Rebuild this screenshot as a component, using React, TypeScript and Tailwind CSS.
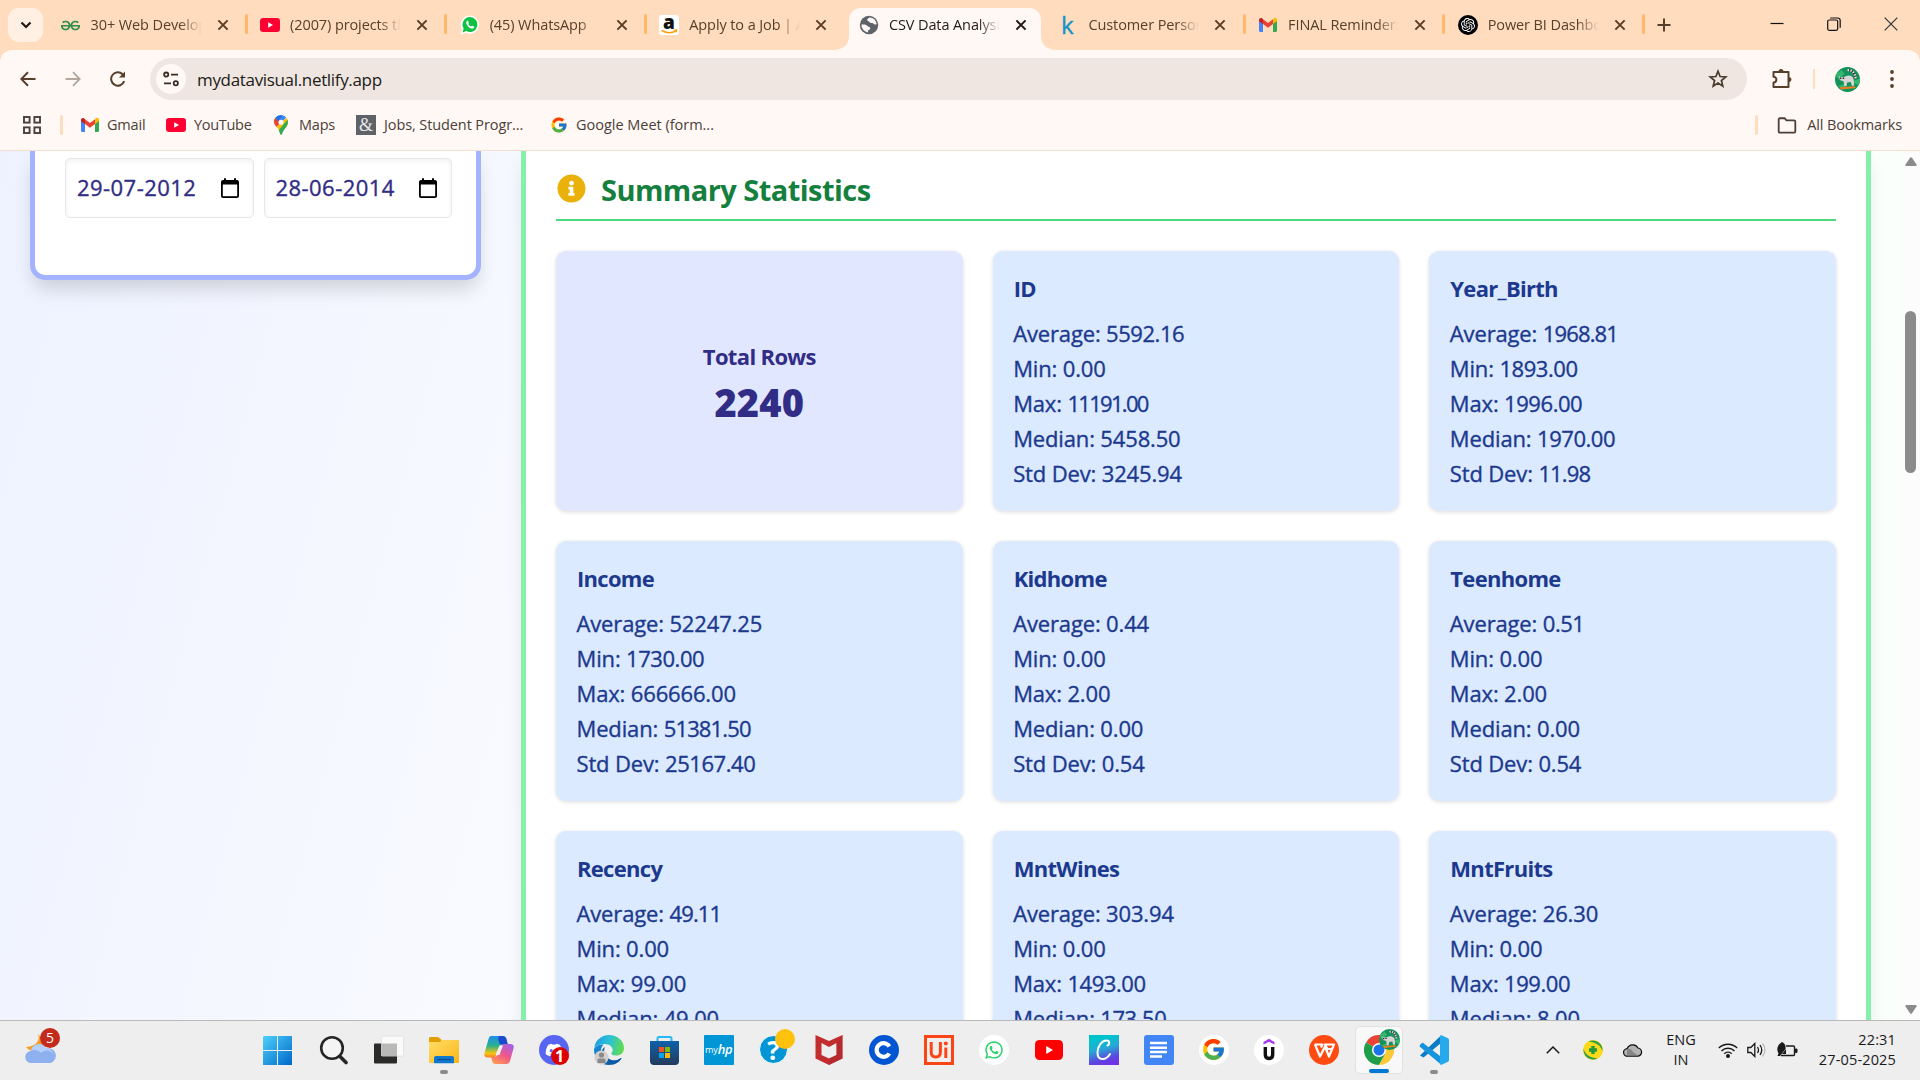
import React from "react";
import { FaInfoCircle, FaDiscord, FaWhatsapp } from "react-icons/fa";
import { FcGoogle } from "react-icons/fc";
import { SiGeeksforgeeks, SiOpenai } from "react-icons/si";

type IconProps = { className?: string };

/* ---------- shared brand icons ---------- */

const YouTube = ({ className = "w-5 h-5" }: IconProps) => (
  <svg viewBox="0 0 20 20" className={className}>
    <rect x="0" y="3" width="20" height="14" rx="3.2" fill="#ff0033" />
    <path d="M8.2 7.2v5.6l4.8-2.8z" fill="#fff" />
  </svg>
);

const Gmail = () => (
  <svg viewBox="0 0 20 20" className="h-5 w-5">
    <path d="M1 5v10.5c0 .8.6 1.5 1.4 1.5H5V8z" fill="#4285f4" />
    <path d="M15 8v9h2.600c.8 0 1.400-.7 1.400-1.500V5z" fill="#34a853" />
    <path d="M15 4.500V9l4-3V5c0-1.900-2-2.700-3.300-1.700z" fill="#fbbc04" />
    <path d="M5 9V4.300L10 8l5-3.700V9l-5 3.800z" fill="#ea4335" />
    <path d="M1 5v1.200L5 9V4.300l-.8-.8C2.900 2.500 1 3.300 1 5z" fill="#c5221f" />
  </svg>
);

const WhatsAppTab = () => (
  <svg viewBox="0 0 20 20" className="h-5 w-5">
    <path d="M10 .5a9 9 0 0 1 0 18.200c-1.500 0-2.900-.3-4.200-1L.6 19.500l1.500-5A9.200 9.200 0 0 1 10 .5z" fill="#fff" />
    <path d="M10 2a7.500 7.500 0 1 1-3.700 14.100l-3.800 1.300 1.200-3.800A7.600 7.600 0 0 1 10 2z" fill="#0dc143" />
    <path d="M7.200 5.700c-1 .7-1.300 2-.6 3.500.9 2 2.700 3.700 4.700 4.400 1.500.5 2.600-.1 3-1.300.1-.4 0-.6-.3-.8l-1.600-.8c-.3-.1-.6 0-.8.3l-.5.6c-1.200-.4-2.200-1.300-2.800-2.500l.5-.7c.1-.2.1-.4 0-.6l-.7-1.700c-.2-.4-.5-.6-.9-.4z" fill="#fff" />
  </svg>
);

const Amazon = () => (
  <span className="flex h-5 w-5 items-center justify-center overflow-hidden rounded-[3px] bg-white">
    <svg viewBox="0 0 20 20" className="h-5 w-5">
      <text x="10" y="13.500" textAnchor="middle" fontSize="19" fontWeight="800" fontFamily="Open Sans, sans-serif" fill="#111">a</text>
      <path d="M2.500 15.400c4.500 3 10.500 3 14.500.2" stroke="#f90" strokeWidth="1.500" fill="none" />
      <path d="M14.800 15l2.900-.1-.6 2.500" stroke="#f90" strokeWidth="1.200" fill="none" />
    </svg>
  </span>
);

const Kaggle = () => (
  <svg viewBox="0 0 20 20" className="h-5 w-5 overflow-visible">
    <text x="3" y="19" fontSize="24" fontWeight="500" fontFamily="Open Sans, sans-serif" fill="#1295c8" stroke="#1295c8" strokeWidth=".4">k</text>
  </svg>
);

const Globe = () => (
  <svg viewBox="0 0 20 20" className="h-5 w-5">
    <circle cx="10" cy="10" r="9.200" fill="#5f6368" />
    <path d="M10.500 2.600c-1.300.8-2.400 1.700-2.300 2.700.2 1 1.500.6 2 1.500.4.8 1.700 1.300 3 1.200 1.200 0 1.600 1.300 2.700 1.500.7.1 1.300-.3 1.700-.6A7.600 7.600 0 0 0 10.500 2.600zM2.400 9.500c1.400.2 3.300-.2 4.600.4 1.300.5 2 1.700 3.200 2.100.8.300 1.400 1 .9 1.900-.5.800-1.600.8-2 1.700-.3.600-.2 1.300 0 1.900A7.600 7.600 0 0 1 2.400 9.500z" fill="#fff8f5" />
  </svg>
);

const OpenAI = () => (
  <span className="flex h-5 w-5 items-center justify-center rounded-full bg-black">
    <SiOpenai className="h-[14px] w-[14px] text-white" />
  </span>
);

const MapsPin = () => (
  <svg viewBox="0 0 20 20" className="h-5 w-5">
    <path d="M3 7.200A7 7 0 0 1 10 .3c2 0 3.900.9 5.200 2.200L10 8.200z" fill="#4285f4" />
    <path d="M4.700 2.600L10 7 5.600 12C4 10 3 9 3 7a6.800 6.800 0 0 1 1.700-4.400z" fill="#ea4335" />
    <path d="M15.500 2.900A7 7 0 0 1 17 7.200c0 2-.8 3.500-2 5L8.500 16c-.8-1.700-1.900-3-3-4.200z" fill="#fbbc04" />
    <path d="M16.500 4.700c.9 2.800.3 5.300-1.500 7.500-2 2.500-3.300 4.500-4 7-.3.700-1.400.7-1.700 0-.5-1.500-.9-2.600-1.600-3.900z" fill="#34a853" />
    <path d="M4.700 2.600A7 7 0 0 1 12 .6L6.500 6z" fill="#1a73e8" />
    <circle cx="10" cy="7.200" r="2.500" fill="#fff" />
  </svg>
);

const Lemur = ({ className = "h-[25px] w-[25px]" }: IconProps) => (
  <svg viewBox="0 0 26 26" className={className}>
    <defs>
      <clipPath id="avatarClip"><circle cx="13" cy="13" r="13" /></clipPath>
    </defs>
    <g clipPath="url(#avatarClip)">
      <rect width="26" height="26" fill="#12935b" />
      <path d="M0 8l7-5 3 4-6 6zM17 15l9-3v8zM3 20l6-2 1 6z" fill="#36b56c" />
      <path d="M13 3.500c4-1 8 2 8.500 9" stroke="#3a3a3a" strokeWidth="2.400" fill="none" />
      <path d="M13 3.500c4-1 8 2 8.500 9" stroke="#e2dede" strokeWidth="2.400" strokeDasharray="1.600 1.400" fill="none" />
      <path d="M4 9l1.500 1.500h4L11 9.500c4-1.500 8 0 8.500 4l.5 6h-2.500l-1-4-4 .5-.5 4H9.500l-.5-5-4-1.500z" fill="#d8d4d4" />
      <path d="M5 11h1.600v1.600H5zM8 11h1.500v1.500H8z" fill="#222" />
      <path d="M5 21l15-1 2 1.800-16 1.700z" fill="#ef7c22" />
    </g>
  </svg>
);

const Cross = ({ className = "text-[#5a3d25]" }: IconProps) => (
  <svg viewBox="0 0 12 12" className={`h-3 w-3 ${className}`}>
    <path d="M1.400 1.400l9.200 9.200M10.600 1.400l-9.200 9.200" stroke="currentColor" strokeWidth="2" />
  </svg>
);

/* ---------- tab strip ---------- */

type Tab = { title: string; icon: React.ReactNode; active?: boolean; sep?: boolean };

const tabs: Tab[] = [
  { title: "30+ Web Development", icon: <SiGeeksforgeeks className="h-[19px] w-[19px] text-[#2f8d46]" />, sep: true },
  { title: "(2007) projects that", icon: <YouTube />, sep: true },
  { title: "(45) WhatsApp", icon: <WhatsAppTab />, sep: true },
  { title: "Apply to a Job | Amazon", icon: <Amazon /> },
  { title: "CSV Data Analysis", icon: <Globe />, active: true },
  { title: "Customer Personality", icon: <Kaggle />, sep: true },
  { title: "FINAL Reminder: Join", icon: <Gmail />, sep: true },
  { title: "Power BI Dashboard", icon: <OpenAI />, sep: true },
];

function TabItem({ tab }: { tab: Tab }) {
  return (
    <div className="relative h-[42px] w-[199.600px] shrink-0">
      {tab.active && (
        <svg viewBox="0 0 224 42" className="absolute -left-[12px] top-0 h-[42px] w-[224px]">
          <path d="M0 42c9 0 16-5 16-14V12C16 5 21 0 28 0h168c7 0 12 5 12 12v16c0 9 7 14 16 14z" fill="#fff8f5" />
        </svg>
      )}
      <div className="relative flex h-[34px] w-full items-center pl-[13.500px]">
        <span className="flex w-5 justify-center">{tab.icon}</span>
        <span
          className={`ml-[10px] w-[111px] overflow-hidden whitespace-nowrap text-[14.500px] leading-5 tracking-[-0.1px] [mask-image:linear-gradient(to_right,black_80%,transparent)] ${tab.active ? "text-[#1f1a17]" : "text-[#57402b]"}`}
        >
          {tab.title}
        </span>
        <span className="ml-[15px]"><Cross className={tab.active ? "text-[#201a17]" : "text-[#5a3d25]"} /></span>
      </div>
      {tab.sep && <span className="absolute right-[-1px] top-[6px] h-5 w-[3px] rounded bg-[#ffb868]" />}
    </div>
  );
}

function TabStrip() {
  return (
    <div className="flex h-[50px] items-start bg-[#ffdcbe] pt-2">
      <div className="ml-2 flex h-[34px] w-[35px] shrink-0 items-center justify-center rounded-[11px] bg-[#fff0e3]">
        <svg viewBox="0 0 12 8" className="h-2 w-3"><path d="M1.500 1.500L6 6l4.500-4.500" stroke="#201a17" strokeWidth="2.200" fill="none" /></svg>
      </div>
      <div className="ml-1 flex h-[42px]">
        {tabs.map((t) => <TabItem key={t.title} tab={t} />)}
      </div>
      <svg viewBox="0 0 14 14" className="ml-[13px] mt-[10px] h-[14px] w-[14px]"><path d="M7 .5v13M.5 7h13" stroke="#57402b" strokeWidth="2" /></svg>
      <div className="ml-auto mr-[22px] mt-[9px] flex items-center gap-[43px]">
        <svg viewBox="0 0 14 14" className="h-[14px] w-[14px]"><path d="M.5 6.500h13" stroke="#111" strokeWidth="1.200" /></svg>
        <svg viewBox="0 0 14 14" className="h-[14px] w-[14px]">
          <rect x=".7" y="3" width="10" height="10.300" rx="1.500" stroke="#111" strokeWidth="1.200" fill="none" />
          <path d="M3.200 1h7.300c1.500 0 2.700 1 2.700 2.700v7" stroke="#111" strokeWidth="1.200" fill="none" />
        </svg>
        <svg viewBox="0 0 14 14" className="h-[14px] w-[14px]"><path d="M.7.7l12.600 12.600M13.300.7L.7 13.300" stroke="#333" strokeWidth="1.200" /></svg>
      </div>
    </div>
  );
}

/* ---------- toolbar and bookmarks ---------- */

function Toolbar() {
  return (
    <div className="flex h-[58px] items-center text-[#57402b]">
      <div className="ml-[20px] flex items-center gap-[29px]">
        <svg viewBox="0 0 16 16" className="h-4 w-4"><path d="M15.500 8H1.500M8 1.200L1.300 8 8 14.800" stroke="currentColor" strokeWidth="2" fill="none" /></svg>
        <svg viewBox="0 0 16 16" className="h-4 w-4"><path d="M.5 8h14M8 1.200L14.700 8 8 14.800" stroke="#b3a79f" strokeWidth="1.800" fill="none" /></svg>
        <svg viewBox="0 0 16 16" className="h-4 w-4">
          <path d="M14.200 10.200A6.700 6.700 0 1 1 12.600 3.200L14.600 5" stroke="currentColor" strokeWidth="2" fill="none" />
          <path d="M15 .4v6H9z" fill="currentColor" />
        </svg>
      </div>
      <div className="ml-[24px] flex h-[42px] w-[1597px] items-center rounded-full bg-[#efe6e1] pl-[6px] pr-[19px]">
        <span className="flex h-[30px] w-[30px] items-center justify-center rounded-full bg-[#fff8f5]">
          <svg viewBox="0 0 16 16" className="h-4 w-4" fill="none" stroke="#3b2c22" strokeWidth="1.800">
            <circle cx="3.200" cy="3.600" r="2.100" /><path d="M8 3.600h7M1 12.300h7" /><circle cx="12.800" cy="12.300" r="2.100" />
          </svg>
        </span>
        <span className="ml-[11px] pt-[1px] text-[17px] leading-6 tracking-[-0.33px] text-[#201a17]">mydatavisual.netlify.app</span>
        <svg viewBox="0 0 20 20" className="ml-auto h-5 w-5">
          <path d="M10 2.200l2.100 5.300 5.700.4-4.400 3.600 1.400 5.600L10 14l-4.800 3.100 1.400-5.600L2.200 7.900l5.700-.4z" stroke="#4b3a2e" strokeWidth="1.700" fill="none" />
        </svg>
      </div>
      <svg viewBox="0 0 22 22" className="ml-[24px] h-[22px] w-[22px]">
        <path d="M2.500 4h15v15h-15v-4.500c3.800 0 3.800-5.800 0-5.800z" stroke="currentColor" strokeWidth="2" fill="none" strokeLinejoin="round" />
        <path d="M7.500 3.500a2.500 2.500 0 0 1 5 0zM18 9a2.500 2.500 0 0 1 0 5z" fill="currentColor" />
      </svg>
      <span className="ml-[20px] h-5 w-[2px] bg-[#ffdcbe]" />
      <span className="ml-[20px]"><Lemur /></span>
      <svg viewBox="0 0 6 18" className="ml-[29px] h-[18px] w-[6px]" fill="currentColor"><circle cx="3" cy="2" r="1.900" /><circle cx="3" cy="9" r="1.900" /><circle cx="3" cy="16" r="1.900" /></svg>
    </div>
  );
}

const bookmark = "whitespace-nowrap text-[14.500px] leading-5 text-[#4b4039]";

function Bookmarks() {
  return (
    <div className="flex h-[42px] items-center pb-[8px]">
      <svg viewBox="0 0 18 18" className="ml-[23px] h-[18px] w-[18px]" fill="none" stroke="#4b3f37" strokeWidth="1.900">
        <rect x="1" y="1" width="5.600" height="5.600" /><rect x="11.400" y="1" width="5.600" height="5.600" />
        <rect x="1" y="11.400" width="5.600" height="5.600" /><rect x="11.400" y="11.400" width="5.600" height="5.600" />
      </svg>
      <span className="ml-[19px] h-5 w-[3px] rounded bg-[#ffdcbe]" />
      <span className="ml-[17px] flex w-[86px] items-center gap-[7px]"><Gmail /><span className={`${bookmark} tracking-[-0.2px]`}>Gmail</span></span>
      <span className="flex w-[105px] items-center gap-[8px]"><YouTube /><span className={`${bookmark} tracking-[-0.3px]`}>YouTube</span></span>
      <span className="flex w-[85px] items-center gap-[8px]"><MapsPin /><span className={`${bookmark} tracking-[-0.2px]`}>Maps</span></span>
      <span className="flex w-[193px] items-center gap-[8px]">
        <span className="flex h-5 w-5 items-center justify-center bg-[#5f6368] font-['Liberation_Serif',serif] text-[18px] leading-5 text-[#e8e8e8]">&amp;</span>
        <span className={`${bookmark} tracking-[-0.1px]`}>Jobs, Student Progr...</span>
      </span>
      <span className="ml-[1px] flex items-center gap-[8px]"><FcGoogle className="h-[18px] w-[18px]" /><span className={`${bookmark} tracking-[-0.02px]`}>Google Meet (form...</span></span>
      <span className="ml-auto h-5 w-[3px] rounded bg-[#ffdcbe]" />
      <svg viewBox="0 0 20 18" className="ml-[19px] h-[17px] w-5"><path d="M1.200 2.500c0-.7.500-1.200 1.200-1.200h5l2 2.300h8.200c.7 0 1.200.5 1.200 1.200v10.500c0 .7-.5 1.200-1.200 1.200H2.400c-.7 0-1.200-.5-1.200-1.200z" stroke="#4b3f37" strokeWidth="1.900" fill="none" /></svg>
      <span className={`ml-[10px] mr-[18px] tracking-[-0.15px] ${bookmark}`}>All Bookmarks</span>
    </div>
  );
}

/* ---------- page ---------- */

const stats = [
  { name: "ID", values: ["5592.16", "0.00", "11191.00", "5458.50", "3245.94"] },
  { name: "Year_Birth", values: ["1968.81", "1893.00", "1996.00", "1970.00", "11.98"] },
  { name: "Income", values: ["52247.25", "1730.00", "666666.00", "51381.50", "25167.40"] },
  { name: "Kidhome", values: ["0.44", "0.00", "2.00", "0.00", "0.54"] },
  { name: "Teenhome", values: ["0.51", "0.00", "2.00", "0.00", "0.54"] },
  { name: "Recency", values: ["49.11", "0.00", "99.00", "49.00"] },
  { name: "MntWines", values: ["303.94", "0.00", "1493.00", "173.50"] },
  { name: "MntFruits", values: ["26.30", "0.00", "199.00", "8.00"] },
];
const labels = ["Average", "Min", "Max", "Median", "Std Dev"];

// Digits set tighter the more narrow "1" figures a number holds.
const valueTracking = (v: string) => {
  const ones = v.split("1").length - 1;
  if (ones === 0) return "tracking-[-0.150px]";
  if (ones === 1) return "tracking-[-0.450px]";
  if (ones === 2) return "tracking-[-0.850px]";
  return "tracking-[-1.700px]";
};

function StatCard({ name, values }: { name: string; values: string[] }) {
  return (
    <div className="h-[260px] rounded-[10px] bg-[#dbeafe] p-5 text-[22px] leading-[35px] text-[#1c398e] shadow-[0_1px_4px_rgba(0,0,0,0.14)]">
      <h3 className="mb-[10px] pl-[1px] font-bold tracking-[-0.7px]">{name}</h3>
      {values.map((v, i) => (
        <p key={labels[i]} className="whitespace-nowrap pl-[0.500px] font-medium tracking-[-0.150px] [-webkit-text-stroke:0.350px_#1c398e]">
          {labels[i]}: <span className={valueTracking(v)}>{v}</span>
        </p>
      ))}
    </div>
  );
}

function DateField({ value }: { value: string }) {
  return (
    <div className="flex h-[60px] flex-1 items-center justify-between rounded-[5px] border border-[#e5e7eb] pl-[11px] pr-[14px] shadow-[inset_0_2px_5px_rgba(0,0,0,0.06)]">
      <span className="pb-[2px] text-[22px] font-medium tracking-[0.450px] text-[#312c85] [-webkit-text-stroke:0.350px_#312c85]">{value}</span>
      <svg viewBox="0 0 18 20" className="h-5 w-[18px]">
        <path d="M2 2h1V.3h2V2h8V.3h2V2h1c1.100 0 2 .9 2 2v14c0 1.100-.9 2-2 2H2c-1.100 0-2-.9-2-2V4c0-1.100.9-2 2-2z" fill="#000" />
        <rect x="1.800" y="6.500" width="14.400" height="11.700" fill="#fff" />
      </svg>
    </div>
  );
}

function Page() {
  return (
    <div className="flex h-[869px] overflow-hidden">
      <main className="flex flex-1 items-start gap-10 bg-[linear-gradient(105deg,#eef2ff,#fafbff_38%,#ffffff_60%,#fafffb)] pl-[30px]">
        <aside className="h-[129px] w-[451px] shrink-0 rounded-b-[15px] border-[5px] border-t-0 border-[#a3b3ff] bg-white pl-[30px] pr-[24px] pt-[7px] shadow-[0_12px_20px_-4px_rgba(0,0,0,0.16)]">
          <div className="flex gap-[10px]">
            <DateField value="29-07-2012" />
            <DateField value="28-06-2014" />
          </div>
        </aside>
        <section className="h-[1000px] w-[1350px] shrink-0 border-x-[5px] border-[#86efac] bg-white px-[30px] shadow-[0_10px_18px_-4px_rgba(0,0,0,0.12)]">
          <div className="flex h-[70px] items-center border-b-2 border-[#4ed882] pt-[6px]">
            <FaInfoCircle className="ml-[1px] h-[29px] w-[29px] text-[#e9b10a]" />
            <h2 className="ml-[15px] pt-[4px] text-[29px] font-bold leading-10 tracking-[-0.550px] text-[#15803d]">Summary Statistics</h2>
          </div>
          <div className="mt-[30px] grid grid-cols-3 gap-[30px]">
            <div className="flex h-[260px] flex-col items-center justify-center rounded-[10px] bg-[#e0e7ff] text-[#312c85] shadow-[0_1px_4px_rgba(0,0,0,0.14)]">
              <h3 className="mb-[5px] text-[22px] font-bold leading-[35px] tracking-[-0.650px]">Total Rows</h3>
              <p className="relative top-px text-[38px] font-extrabold leading-[45px] tracking-[0.200px]">2240</p>
            </div>
            {stats.map((s) => <StatCard key={s.name} {...s} />)}
          </div>
        </section>
      </main>
      <div className="flex w-[19px] flex-col items-center bg-[#fcfcfc]">
        <svg viewBox="0 0 12 9" className="mt-[6px] h-[9px] w-3"><path d="M5 .8q1-1.200 2 0l4.500 6.700q.5 1.500-1 1.500h-9q-1.500 0-1-1.500z" fill="#8b8b8b" /></svg>
        <span className="mt-[145px] h-[162px] w-[11px] rounded-full bg-[#8b8b8b]" />
        <svg viewBox="0 0 12 9" className="mb-[6px] mt-auto h-[9px] w-3 rotate-180"><path d="M5 .8q1-1.200 2 0l4.500 6.700q.5 1.500-1 1.500h-9q-1.500 0-1-1.500z" fill="#8b8b8b" /></svg>
      </div>
    </div>
  );
}

/* ---------- taskbar ---------- */

const WindowsLogo = () => (
  <svg viewBox="0 0 30 30" className="mr-[3px] h-[30px] w-[30px]">
    <defs><linearGradient id="win" x1="0" y1="0" x2="1" y2="1"><stop offset="0" stopColor="#4cd0fb" /><stop offset="1" stopColor="#0068ca" /></linearGradient></defs>
    <path d="M2 1h13v14H1V2zM16 1h14v14H16zM1 16h14v14H1zM16 16h14v14H16z" fill="url(#win)" />
  </svg>
);
const SearchGlyph = () => (
  <svg viewBox="0 0 30 30" className="h-[30px] w-[30px]" fill="none" stroke="#252525">
    <circle cx="13" cy="13" r="10.800" strokeWidth="2.600" fill="#f4f4f4" /><path d="M21 21.500l6 6" strokeWidth="3.600" strokeLinecap="round" />
  </svg>
);
const TaskView = () => (
  <svg viewBox="0 0 30 30" className="h-[30px] w-[30px]">
    <rect x="0" y="8.500" width="23" height="20" rx="1" fill="#2b2b29" />
    <rect x="7.500" y="1" width="22" height="20" rx="1" fill="#fafafa" stroke="#dedede" strokeWidth=".8" />
    <rect x="7.500" y="8.500" width="15.500" height="12.500" fill="#b9b9b8" />
  </svg>
);
const Folder = () => (
  <svg viewBox="0 0 30 30" className="h-[30px] w-[30px]">
    <defs><linearGradient id="fold" x1="0" y1="0" x2="1" y2="1"><stop offset="0" stopColor="#ffdd6a" /><stop offset="1" stopColor="#fcb714" /></linearGradient></defs>
    <path d="M0 3.200Q0 2 1.200 2H9l3.300 2.500V8H0z" fill="#e0a004" />
    <path d="M0 7h11l2-2h16q1 0 1 1v21q0 1-1 1H1q-1 0-1-1z" fill="url(#fold)" />
    <path d="M5 28.300V23q0-2 2-2h16q2 0 2 2v5.300z" fill="#0f78cd" /><path d="M8.500 24.500h13" stroke="#0a4f92" strokeWidth="1.200" />
  </svg>
);
const Copilot = () => (
  <svg viewBox="0 0 30 30" className="h-[30px] w-[30px]">
    <defs>
      <linearGradient id="cpA" x1="0" y1="0" x2="0" y2="1"><stop offset="0" stopColor="#1c8ff0" /><stop offset=".45" stopColor="#2bb08c" /><stop offset=".8" stopColor="#f6c410" /><stop offset="1" stopColor="#f77e30" /></linearGradient>
      <linearGradient id="cpB" x1=".8" y1="0" x2=".2" y2="1"><stop offset="0" stopColor="#a760e8" /><stop offset=".5" stopColor="#f0568a" /><stop offset="1" stopColor="#ff9a50" /></linearGradient>
    </defs>
    <path d="M7 1h12q2.500 0 3.200 2.500l1.600 6h-4.500q-3 0-4 3L12.500 20q-1 2.500-3.500 2.500H3.500Q-.5 22.500.5 18L4.500 4Q5.300 1 7 1z" fill="url(#cpA)" />
    <path d="M15 1h4q2.500 0 3.200 2.500l1.600 6H16L14 4z" fill="#1b4ad0" />
    <path d="M23 29H11.500q-2.500 0-3.200-2.500L7 22h3q3 0 4-3l3-7.500q1-2.500 3.500-2.500h6q4 0 3 4.500L26 26q-.8 3-3 3z" fill="url(#cpB)" />
    <path d="M15.500 10.500h3.500l-3.500 9.500h-4z" fill="#f7eef6" />
  </svg>
);
const Discord = () => (
  <span className="relative flex h-[30px] w-[30px] items-center justify-center rounded-full bg-[#5865f2]">
    <FaDiscord className="h-[18px] w-[18px] text-white" />
    <span className="absolute right-0 bottom-0 flex h-[18px] w-[18px] items-center justify-center rounded-full bg-[#dc0000] text-[16px] font-bold leading-none text-white">1</span>
  </span>
);
const Edge = () => (
  <svg viewBox="0 0 30 30" className="h-[30px] w-[30px]">
    <defs>
      <linearGradient id="edA" x1="0" y1=".3" x2="1" y2=".5"><stop offset="0" stopColor="#1b9de2" /><stop offset=".5" stopColor="#2cc3d4" /><stop offset="1" stopColor="#62dc4c" /></linearGradient>
      <linearGradient id="edB" x1="0" y1="0" x2="1" y2="1"><stop offset="0" stopColor="#1591dc" /><stop offset="1" stopColor="#0c4f9c" /></linearGradient>
    </defs>
    <path d="M.3 13C1 5.500 7.300 0 15 0c8.500 0 15 6 15 13 0 5-3.500 7.500-8 7.500-3 0-4.600-1-4.600-2 0-.8 1.300-1.400 1.300-3.700 0-3-3.500-5.800-8-5.800C5.500 9 1.500 11 .3 13z" fill="url(#edA)" />
    <path d="M0 14c1.500-3.500 5.500-5 9.500-4.500-3 3-3.500 8-1 12 3 4.800 9.500 6 14.500 3.500 2-1 4-2.500 4.500-2C25 27 20 30 15 30 6.500 30-.3 23 0 14z" fill="url(#edB)" />
    <path d="M11 12c-2.500 5 .5 11 6.500 13 4 1 7.500-.3 10-2 .5.500-3 5-8 6.500-7 0-13-5-12-12 .2-2.500 1.500-4.500 3.500-5.500z" fill="#0e5aa5" />
    <circle cx="7.500" cy="22.500" r="7" fill="#d2d0ce" /><circle cx="7.500" cy="20" r="2.600" fill="#8b8987" /><path d="M3.500 28v-3q0-1.500 1.500-1.500h5q1.500 0 1.500 1.500v3z" fill="#8b8987" />
  </svg>
);
const Store = () => (
  <svg viewBox="0 0 30 30" className="h-[30px] w-[30px]">
    <defs><linearGradient id="sto" x1="0" y1="0" x2="0" y2="1"><stop offset="0" stopColor="#0f61ab" /><stop offset="1" stopColor="#243a5c" /></linearGradient></defs>
    <path d="M8.500 8V3.500Q8.500 2 10 2h11q1.500 0 1.500 1.500V8" stroke="#28b8f2" strokeWidth="2" fill="none" />
    <path d="M1 6h29v20q0 4-4 4H5q-4 0-4-4z" fill="url(#sto)" />
    <path d="M10 12h5v5h-5z" fill="#f25022" /><path d="M16 12h5v5h-5z" fill="#7fba00" /><path d="M10 18h5v5h-5z" fill="#00a4ef" /><path d="M16 18h5v5h-5z" fill="#ffb900" />
  </svg>
);
const MyHp = () => (
  <span className="flex h-[30px] w-[30px] items-center justify-center rounded-[1px] bg-[#0096d6] text-[9px] leading-none text-white">
    my<i className="text-[13px] font-semibold tracking-[-0.5px]">hp</i>
  </span>
);
const Help = () => (
  <span className="relative flex h-[30px] w-[30px] items-center justify-center">
    <span className="flex h-[29px] w-[29px] items-center justify-center rounded-full border-[1.500px] border-white bg-[#0096d6] text-[26px] font-bold leading-none text-white">?</span>
    <span className="absolute -right-[6px] -top-[6px] h-5 w-5 rounded-full bg-[#fec20e]" />
  </span>
);
const McAfee = () => (
  <svg viewBox="0 0 30 30" className="h-[30px] w-[30px]">
    <path d="M1.500 0L15 6 28.500 0v23.500L15 30 1.500 23.500z" fill="#c32d30" />
    <path d="M7.500 8L15 12l7.500-4v12L15 23.500 7.500 20z" fill="#eee" />
    <path d="M22.500 8l6-8v23.500L15 30v-6.500l7.500-3.500z" fill="#a92628" opacity=".5" />
  </svg>
);
const CCircle = () => (
  <svg viewBox="0 0 30 30" className="h-[30px] w-[30px]"><circle cx="15" cy="15" r="15" fill="#0056d2" /><path d="M20.300 11.500a6.800 6.800 0 1 0 0 7" stroke="#fff" strokeWidth="4.200" fill="none" /></svg>
);
const UiPath = () => (
  <svg viewBox="0 0 30 30" className="h-[30px] w-[30px]">
    <rect width="30" height="30" fill="#fa4616" /><rect x="3" y="3" width="24" height="24" fill="#f1efee" />
    <path d="M7.200 7v10q0 5 4.600 5t4.600-5V7" stroke="#fa4616" strokeWidth="3" fill="none" /><path d="M21.800 12.500V23" stroke="#fa4616" strokeWidth="3" /><circle cx="21.800" cy="8.500" r="2" fill="#fa4616" />
  </svg>
);
const Canva = () => (
  <span className="flex h-[30px] w-[30px] items-center justify-center bg-[linear-gradient(165deg,#00c4cc_15%,#25a9d5_45%,#5a45e0_75%,#7d2ae8)]">
    <svg viewBox="0 0 30 30" className="h-[30px] w-[30px]"><path d="M18.500 10.500c2.200-.8 2.700-5-1-5-5 0-9 6.500-9 12 0 4 2 6.500 5 6.500 3.500 0 6-2.500 7.500-5" stroke="#fff" strokeWidth="2" fill="none" strokeLinecap="round" /></svg>
  </span>
);
const Docs = () => (
  <svg viewBox="0 0 30 30" className="h-[30px] w-[30px]"><rect width="30" height="30" rx="3" fill="#4285f4" /><path d="M6 8h17M6 12.800h17M6 17h17M6 21.500h12" stroke="#fff" strokeWidth="2.600" /></svg>
);
const Udemy = () => (
  <svg viewBox="0 0 30 30" className="h-[30px] w-[30px]"><circle cx="15" cy="15" r="15" fill="#fff" /><path d="M9.500 9.500V7L15 3.800 20.500 7v2.500L15 6.800z" fill="#a435f0" /><path d="M11.300 12v7.500q0 4 3.700 4t3.700-4V12" stroke="#111" strokeWidth="3.400" fill="none" /></svg>
);
const Wps = () => (
  <svg viewBox="0 0 30 30" className="h-[30px] w-[30px]"><circle cx="15" cy="15" r="15" fill="#ff4a12" /><path d="M5.500 9.500h8l-1.500 3M6 9.500l5 12 5-10 4 10 5-12h-9l2.500 4.500h4" stroke="#fff" strokeWidth="2.200" fill="none" strokeLinejoin="round" /></svg>
);
const Chrome = () => (
  <span className="relative flex h-12 w-12 shrink-0 items-center justify-center rounded-[5px] border border-[#e2e2e2] bg-[#f8f8f8]">
    <svg viewBox="0 0 30 30" className="h-[30px] w-[30px]">
      <path d="M15 15L2 7.500A15 15 0 0 1 28 7.500z" fill="#ea4335" />
      <path d="M15 15L2 7.500A15 15 0 0 0 15 30l6.500-11.300z" fill="#1e9e4a" />
      <path d="M15 7.500h13A15 15 0 0 1 15 30l6.500-11.300z" fill="#fcc934" />
      <circle cx="15" cy="15" r="7" fill="#fff" /><circle cx="15" cy="15" r="5.500" fill="#1a73e8" />
    </svg>
    <span className="absolute right-[2px] top-[2px] flex"><Lemur className="h-[21px] w-[21px]" /></span>
    <span className="absolute bottom-0 h-1 w-5 rounded-full bg-[#0078d4]" />
  </span>
);
const VsCode = () => (
  <svg viewBox="0 0 30 30" className="h-[30px] w-[30px]">
    <path d="M1 20.500L22 .5v7.500L4.500 22.500z" fill="#0a7bc4" /><path d="M.8 10L3.500 7.500 22 21.800v7.700L.8 11.800z" fill="#1593dc" /><path d="M22 0l7 3.200q1 .5 1 1.800v20q0 1.300-1 1.800L22 30l-1-1V1z" fill="#27a9ee" />
  </svg>
);

const Disc = ({ children }: { children: React.ReactNode }) => (
  <span className="flex h-[30px] w-[30px] items-center justify-center rounded-full bg-white">{children}</span>
);

const apps: { id: string; node: React.ReactNode; dot?: boolean }[] = [
  { id: "start", node: <WindowsLogo /> },
  { id: "search", node: <SearchGlyph /> },
  { id: "taskview", node: <TaskView /> },
  { id: "files", node: <Folder />, dot: true },
  { id: "copilot", node: <Copilot /> },
  { id: "discord", node: <Discord /> },
  { id: "edge", node: <Edge /> },
  { id: "store", node: <Store /> },
  { id: "myhp", node: <MyHp /> },
  { id: "help", node: <Help /> },
  { id: "mcafee", node: <McAfee /> },
  { id: "coursera", node: <CCircle /> },
  { id: "uipath", node: <UiPath /> },
  { id: "whatsapp", node: <Disc><FaWhatsapp className="h-[20px] w-[20px] text-[#25d366]" /></Disc> },
  { id: "youtube", node: <svg viewBox="0 0 28 20" className="h-5 w-7"><rect width="28" height="20" rx="4.500" fill="#f00" /><path d="M11.200 6v8l6.800-4z" fill="#fff" /></svg> },
  { id: "canva", node: <Canva /> },
  { id: "docs", node: <Docs /> },
  { id: "google", node: <Disc><FcGoogle className="h-[25px] w-[25px]" /></Disc> },
  { id: "udemy", node: <Udemy /> },
  { id: "wps", node: <Wps /> },
  { id: "chrome", node: <Chrome /> },
  { id: "vscode", node: <VsCode />, dot: true },
];

function Taskbar() {
  return (
    <div className="flex h-[60px] items-center border-t border-[#b9b9b9] bg-[#eeeeee] pb-[2px]">
      <div className="relative ml-[25px] h-9 w-[36px]">
        <svg viewBox="0 0 32 32" className="h-8 w-8">
          <path d="M13 2c2.500 6-1.500 12.500-12 13 3 4 7 4.500 10 4 6-1 9-8 5-14z" fill="#f4a02c" />
          <path d="M6.500 31a6 6 0 0 1-.5-12 8 8 0 0 1 15-2.500 7.500 7.500 0 0 1 4.500 14.500z" fill="#8eb0ee" />
          <path d="M6 19a8 8 0 0 1 10 2 8 8 0 0 1 13 2 7.500 7.500 0 0 0-8-6.500A8 8 0 0 0 6 19z" fill="#b4cff9" />
        </svg>
        <span className="absolute -top-[4px] left-[15px] flex h-5 w-5 items-center justify-center rounded-full bg-[#c42b1c] text-[14px] leading-none text-white">5</span>
      </div>
      <div className="ml-[190px] flex h-full">
        {apps.map((a) => (
          <div key={a.id} className="relative flex w-[55px] items-center justify-center">
            {a.node}
            {a.dot && <span className="absolute bottom-[4px] h-1 w-2 rounded-full bg-[#8a8a8a]" />}
          </div>
        ))}
      </div>
      <svg viewBox="0 0 14 8" className="ml-[85px] h-2 w-[14px]"><path d="M.8 7.200L7 1l6.200 6.200" stroke="#1a1a1a" strokeWidth="1.500" fill="none" /></svg>
      <svg viewBox="0 0 20 20" className="ml-[23px] h-5 w-5">
        <circle cx="10" cy="10" r="10" fill="#ffd91a" />
        <path d="M5.500 1.500C12-1.500 20 3 19.500 11c-2-6-7-8.500-14-9.500zM14.500 18.500C8 21.500 0 17 .5 9c2 6 7 8.500 14 9.500z" fill="#2ba046" />
        <path d="M8.300 6h3.400v2.300H14v3.400h-2.300V14H8.300v-2.300H6V8.300h2.300z" fill="#1f9a3c" />
      </svg>
      <svg viewBox="0 0 20 14" className="ml-5 h-[14px] w-5"><path d="M4.500 13.200a3.800 3.800 0 0 1-.3-7.600A6 6 0 0 1 15 5a4.200 4.200 0 0 1 .5 8.200z" fill="#b3b3b3" stroke="#111" strokeWidth="1.200" /><path d="M4 6q4-1 6 3l5 3.500H4z" fill="#868686" /></svg>
      <div className="ml-[9px] w-[58px] text-center text-[14.500px] leading-[20px] text-[#1a1a1a]">ENG<br />IN</div>
      <svg viewBox="0 0 20 16" className="ml-[8px] h-4 w-5" fill="none" stroke="#1a1a1a" strokeWidth="1.400">
        <path d="M.8 6a13 13 0 0 1 18.400 0M3.500 9a9.200 9.200 0 0 1 13 0M6.300 11.700a5.200 5.200 0 0 1 7.400 0" /><circle cx="10" cy="14" r="1.300" fill="#1a1a1a" />
      </svg>
      <svg viewBox="0 0 20 16" className="ml-[9px] h-4 w-5" fill="none" stroke="#1a1a1a" strokeWidth="1.300">
        <path d="M.8 5.500h3l4-4v13l-4-4h-3zM10.500 5q2 3 0 6M13 3q3.500 5 0 10" /><path d="M15.500 1.500q5 6.500 0 13" stroke="#bdbdbd" />
      </svg>
      <svg viewBox="0 0 22 18" className="ml-[9px] h-[18px] w-[22px]">
        <path d="M10 5h7.500q1 0 1 1v7.500q0 1-1 1H5" stroke="#1a1a1a" strokeWidth="1.400" fill="none" /><path d="M19.500 8h1.500v3.500h-1.500z" fill="#1a1a1a" stroke="#1a1a1a" />
        <path d="M6 1c3 1.500 4 4 3.500 7L4 15H1.500l1-2.500C0 8 1.500 4 6 1z" fill="#1a1a1a" /><path d="M10 8v5H6z" fill="#1a1a1a" />
      </svg>
      <div className="ml-auto mr-[24px] text-right text-[14.500px] leading-[20px] tracking-[0.150px] text-[#1a1a1a]">22:31<br />27-05-2025</div>
    </div>
  );
}

export default function App() {
  return (
    <div className="flex h-[1080px] w-[1920px] flex-col overflow-hidden bg-[#eeeeee] font-['Open_Sans',sans-serif]">
      <TabStrip />
      <header className="h-[101px] shrink-0 bg-[#ffdcbe]">
        <div className="h-[101px] rounded-t-[12px] border-b border-[#f3dfd0] bg-[#fff8f5]">
          <Toolbar />
          <Bookmarks />
        </div>
      </header>
      <Page />
      <Taskbar />
    </div>
  );
}
